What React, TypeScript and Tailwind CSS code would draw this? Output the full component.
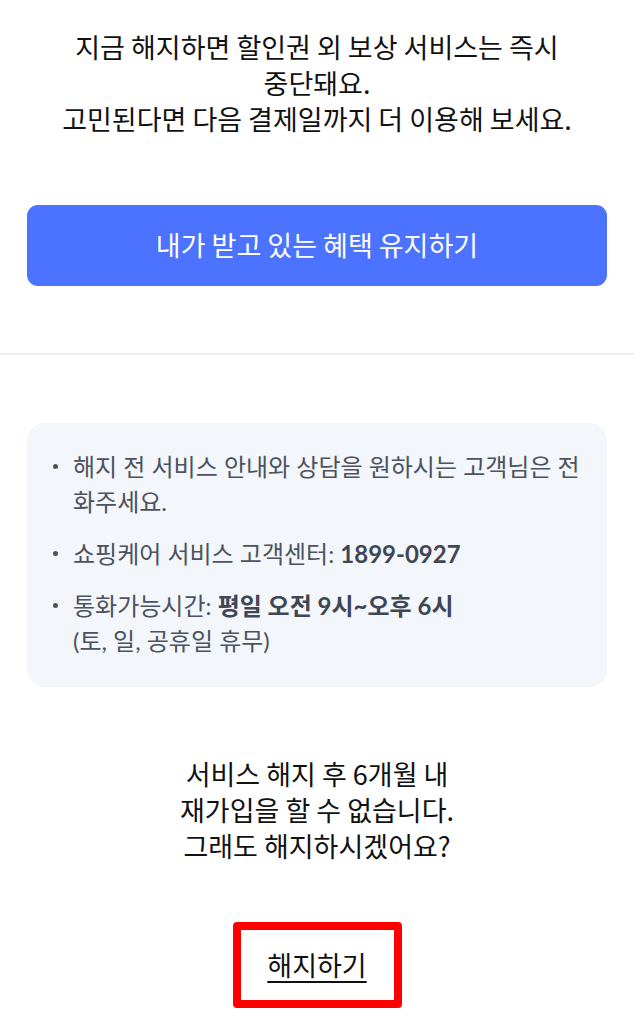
import React from "react";

const kr = { fontFamily: "'Noto Sans CJK KR', 'Noto Sans', sans-serif" };
const latoKr = { fontFamily: "Lato, 'Noto Sans CJK KR', sans-serif" };

function Bullet() {
  return (
    <span className="w-[20px] h-[35px] shrink-0 flex items-center">
      <span className="w-[5px] h-[5px] rounded-full bg-[#4b5260]" />
    </span>
  );
}

export default function App() {
  return (
    <div className="w-[634px] min-h-[1024px] bg-white" style={kr}>
      <section className="pt-[29px] pb-[67px]">
        <p className="text-center text-[27px] leading-[36px] text-[#111111]">
          지금 해지하면 할인권 외 보상 서비스는 즉시
          <br />
          중단돼요.
          <br />
          고민된다면 다음 결제일까지 더 이용해 보세요.
        </p>
        <div className="px-[27px] mt-[68px]">
          <button className="w-full h-[81px] rounded-[11px] bg-[#4c73ff] text-white text-[27px] flex items-center justify-center">
            내가 받고 있는 혜택 유지하기
          </button>
        </div>
      </section>
      <div className="h-[2px] bg-[#f0f0f4]" />
      <section className="px-[27px] pt-[68px]">
        <div
          className="rounded-[18px] bg-[#f3f6fb] pl-[26px] pr-[12px] pt-[26px] pb-[29px] text-[#4b5260] text-[24px] leading-[35px] flex flex-col gap-[17px]"
          style={latoKr}
        >
          <div className="flex">
            <Bullet />
            <span>해지 전 서비스 안내와 상담을 원하시는 고객님은 전화주세요.</span>
          </div>
          <div className="flex">
            <Bullet />
            <span>
              쇼핑케어 서비스 고객센터: <b className="font-bold text-[#3f4654]">1899-0927</b>
            </span>
          </div>
          <div className="flex">
            <Bullet />
            <span>
              통화가능시간: <b className="font-bold text-[#3f4654]">평일 오전 9시~오후 6시</b>
              <br />
              (토, 일, 공휴일 휴무)
            </span>
          </div>
        </div>
        <p className="mt-[69px] text-center text-[27px] leading-[36px] text-[#111111]">
          서비스 해지 후 6개월 내
          <br />
          재가입을 할 수 없습니다.
          <br />
          그래도 해지하시겠어요?
        </p>
        <div className="flex justify-center mt-[58px]">
          <div className="w-[169px] h-[86px] border-[8px] border-[#ff0000] rounded-[4px] flex items-center justify-center">
            <span className="text-[27px] text-[#111111] underline underline-offset-[5px] decoration-[1.5px]">
              해지하기
            </span>
          </div>
        </div>
      </section>
    </div>
  );
}
